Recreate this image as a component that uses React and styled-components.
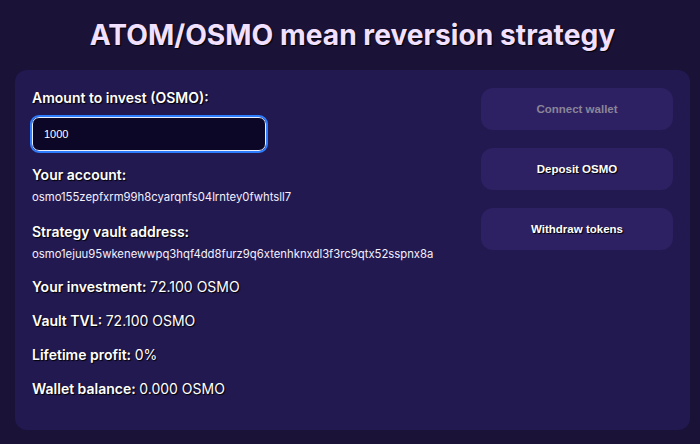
import React from "react";
import styled, { createGlobalStyle } from "styled-components";

const GlobalStyle = createGlobalStyle`
  html, body {
    margin: 0;
    padding: 0;
    background: #1a1237;
    color: #ffffff;
    font-family: Inter, "Noto Sans", sans-serif;
  }
`;

const Page = styled.div`
  width: 700px;
  height: 444px;
  padding: 0 10px 14px 15px;
  box-sizing: border-box;
  display: flex;
  flex-direction: column;
`;

const Title = styled.h1`
  margin: 0;
  height: 70px;
  display: flex;
  align-items: center;
  justify-content: center;
  font-size: 28.2px;
  font-weight: 700;
  color: #f1e0ff;
  text-shadow: 1px 1px 1px #000;
`;

const Panel = styled.div`
  flex: 1;
  background: #221950;
  border-radius: 12px;
  padding: 18px 17px;
  display: flex;
  justify-content: space-between;
`;

const Info = styled.div`
  display: flex;
  flex-direction: column;
`;

const Label = styled.div`
  font-size: 14px;
  font-weight: 600;
  line-height: 20px;
  text-shadow: 1px 1px 1px #000;
  margin-top: ${p => p.$gap || 0}px;
`;

const Value = styled.span`
  font-weight: 400;
`;

const Address = styled.div`
  font-size: 11.3px;
  line-height: 16px;
  margin-top: 4px;
  color: #f4f0ff;
`;

const Input = styled.input`
  margin-top: 9px;
  width: 234px;
  height: 34px;
  box-sizing: border-box;
  background: #0c0726;
  border: 1.5px solid #e8f0ff;
  outline: 2px solid #2f7dff;
  border-radius: 7px;
  color: #fff;
  font-family: "Liberation Sans", Arial, sans-serif;
  font-size: 11px;
  padding: 0 11px;
`;

const Actions = styled.div`
  display: flex;
  flex-direction: column;
  gap: 18px;
`;

const Button = styled.button`
  width: 192px;
  height: 42px;
  border: none;
  border-radius: 12px;
  background: #2e2163;
  color: ${p => (p.$disabled ? "#8a8598" : "#ffffff")};
  font-family: "Liberation Sans", Arial, sans-serif;
  font-size: 11.5px;
  font-weight: 700;
  text-shadow: ${p => (p.$disabled ? "none" : "1px 1px 1px #000")};
`;

export default function App() {
  return (
    <>
      <GlobalStyle />
      <Page>
        <Title>ATOM/OSMO mean reversion strategy</Title>
        <Panel>
          <Info>
            <Label>Amount to invest (OSMO):</Label>
            <Input defaultValue="1000" />
            <Label $gap={14}>Your account:</Label>
            <Address>osmo155zepfxrm99h8cyarqnfs04lrntey0fwhtsll7</Address>
            <Label $gap={17}>Strategy vault address:</Label>
            <Address>osmo1ejuu95wkenewwpq3hqf4dd8furz9q6xtenhknxdl3f3rc9qtx52sspnx8a</Address>
            <Label $gap={15}>
              Your investment: <Value>72.100 OSMO</Value>
            </Label>
            <Label $gap={14}>
              Vault TVL: <Value>72.100 OSMO</Value>
            </Label>
            <Label $gap={14}>
              Lifetime profit: <Value>0%</Value>
            </Label>
            <Label $gap={14}>
              Wallet balance: <Value>0.000 OSMO</Value>
            </Label>
          </Info>
          <Actions>
            <Button $disabled>Connect wallet</Button>
            <Button>Deposit OSMO</Button>
            <Button>Withdraw tokens</Button>
          </Actions>
        </Panel>
      </Page>
    </>
  );
}
